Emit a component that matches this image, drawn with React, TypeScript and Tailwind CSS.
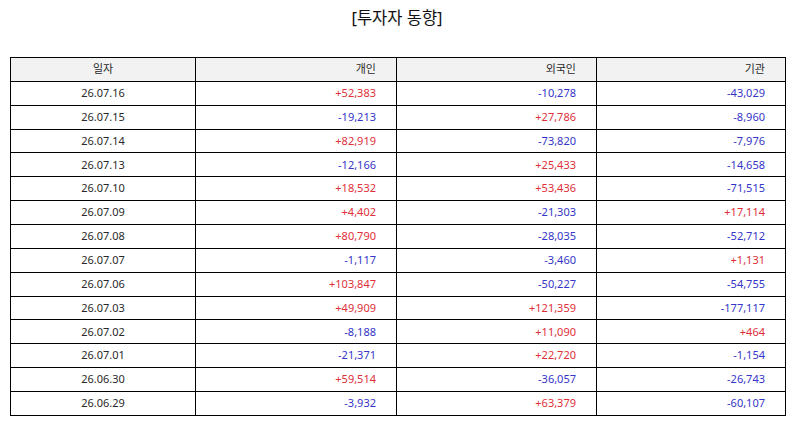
import React from "react";

const rows: [string, string, string, string][] = [
  ["26.07.16", "+52,383", "-10,278", "-43,029"],
  ["26.07.15", "-19,213", "+27,786", "-8,960"],
  ["26.07.14", "+82,919", "-73,820", "-7,976"],
  ["26.07.13", "-12,166", "+25,433", "-14,658"],
  ["26.07.10", "+18,532", "+53,436", "-71,515"],
  ["26.07.09", "+4,402", "-21,303", "+17,114"],
  ["26.07.08", "+80,790", "-28,035", "-52,712"],
  ["26.07.07", "-1,117", "-3,460", "+1,131"],
  ["26.07.06", "+103,847", "-50,227", "-54,755"],
  ["26.07.03", "+49,909", "+121,359", "-177,117"],
  ["26.07.02", "-8,188", "+11,090", "+464"],
  ["26.07.01", "-21,371", "+22,720", "-1,154"],
  ["26.06.30", "+59,514", "-36,057", "-26,743"],
  ["26.06.29", "-3,932", "+63,379", "-60,107"],
];

function Num({ v }: { v: string }) {
  const cls = v.startsWith("+") ? "text-[#e0303a]" : "text-[#3535c8]";
  return (
    <td className={`border border-black text-right pr-[20px] ${cls}`}>{v}</td>
  );
}

export default function App() {
  return (
    <div
      className="w-[794px] h-[425px] bg-white"
      style={{ fontFamily: '"Noto Sans", "Noto Sans CJK KR", sans-serif' }}
    >
      <div className="pt-[6px] h-[57px] text-center text-[16.5px] leading-[24px] text-[#111]">
        [투자자 동향]
      </div>
      <table className="ml-[10px] w-[775px] border-collapse table-fixed text-[11px] text-[#2a2a2a]">
        <colgroup>
          <col className="w-[185px]" />
          <col className="w-[201px]" />
          <col className="w-[200px]" />
          <col className="w-[189px]" />
        </colgroup>
        <thead>
          <tr className="h-[23.87px] bg-[#f2f2f2]">
            <th className="border border-black font-normal text-center">일자</th>
            <th className="border border-black font-normal text-right pr-[20px]">개인</th>
            <th className="border border-black font-normal text-right pr-[20px]">외국인</th>
            <th className="border border-black font-normal text-right pr-[20px]">기관</th>
          </tr>
        </thead>
        <tbody>
          {rows.map((r) => (
            <tr key={r[0]} className="h-[23.87px]">
              <td className="border border-black text-center">{r[0]}</td>
              <Num v={r[1]} />
              <Num v={r[2]} />
              <Num v={r[3]} />
            </tr>
          ))}
        </tbody>
      </table>
    </div>
  );
}
